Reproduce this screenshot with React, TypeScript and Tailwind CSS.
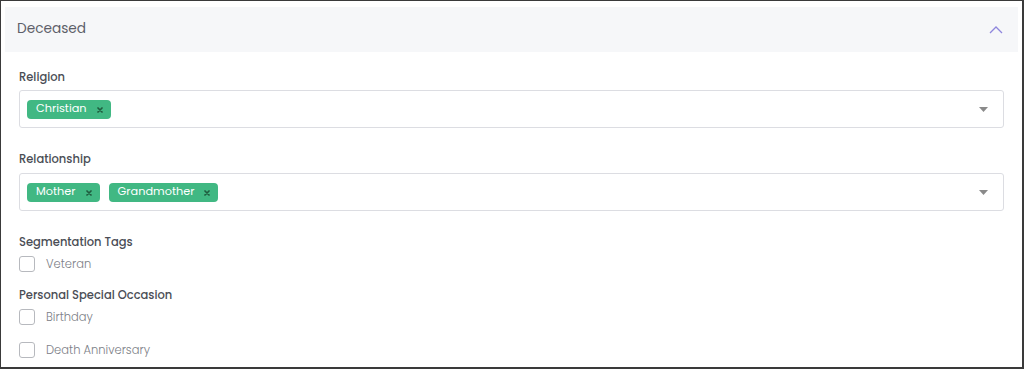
import React from 'react';

function Chip({ label }: { label: string }) {
  return (
    <span className="flex h-[19px] items-center gap-[10px] rounded-[4px] bg-[#41b883] pl-[9px] pr-[8px] text-[11.3px] leading-none text-white">
      {label}
      <svg width="6" height="6" viewBox="0 0 6 6" className="mt-[1px]">
        <path d="M1 1L5 5M5 1L1 5" stroke="#1f5c3f" strokeWidth="1.7" strokeLinecap="round" />
      </svg>
    </span>
  );
}

function MultiSelect({ values }: { values: string[] }) {
  return (
    <div className="flex h-[38px] items-center justify-between rounded-[3px] border border-[#dcdde2] pl-[7px] pr-[15px]">
      <div className="flex items-center gap-[9px]">
        {values.map((v) => (
          <Chip key={v} label={v} />
        ))}
      </div>
      <svg width="9" height="5" viewBox="0 0 9 5">
        <path d="M0 0H9L4.5 5Z" fill="#8a8a8a" />
      </svg>
    </div>
  );
}

function Check({ label }: { label: string }) {
  return (
    <label className="flex h-[18px] items-center gap-[11px]">
      <span className="h-[16px] w-[16px] rounded-[3px] border border-[#b7b9be] bg-white" />
      <span className="text-[11.5px] font-light leading-[18px] text-[#7d8087]">{label}</span>
    </label>
  );
}

export default function App() {
  return (
    <div
      className="h-[369px] w-[1024px] overflow-hidden border-t border-l border-r-2 border-b-2 border-[#3a3a3a] bg-white"
      style={{ fontFamily: 'Poppins, "Open Sans", sans-serif' }}
    >
      <div className="mx-[4px] mt-[6px] flex h-[45px] items-center justify-between bg-[#f6f7f9] pl-[12px] pr-[15px]">
        <span className="text-[13.7px] text-[#5d6069]">Deceased</span>
        <svg width="14" height="8" viewBox="0 0 14 8">
          <path d="M1 7L7 1L13 7" fill="none" stroke="#8f86dd" strokeWidth="1.3" />
        </svg>
      </div>

      <div className="px-[18px] pt-[16px]">
        <div className="text-[11.5px] font-medium leading-[18px] text-[#4a4d55]">Religion</div>
        <div className="mt-[4px]">
          <MultiSelect values={['Christian']} />
        </div>

        <div className="mt-[22px] text-[11.5px] font-medium leading-[18px] text-[#4a4d55]">Relationship</div>
        <div className="mt-[5px]">
          <MultiSelect values={['Mother', 'Grandmother']} />
        </div>

        <div className="mt-[22px] text-[11.5px] font-medium leading-[18px] text-[#4a4d55]">Segmentation Tags</div>
        <div className="mt-[4px]">
          <Check label="Veteran" />
        </div>

        <div className="mt-[13px] text-[11.5px] font-medium leading-[18px] text-[#4a4d55]">Personal Special Occasion</div>
        <div className="mt-[4px] flex flex-col gap-[15px]">
          <Check label="Birthday" />
          <Check label="Death Anniversary" />
        </div>
      </div>
    </div>
  );
}
